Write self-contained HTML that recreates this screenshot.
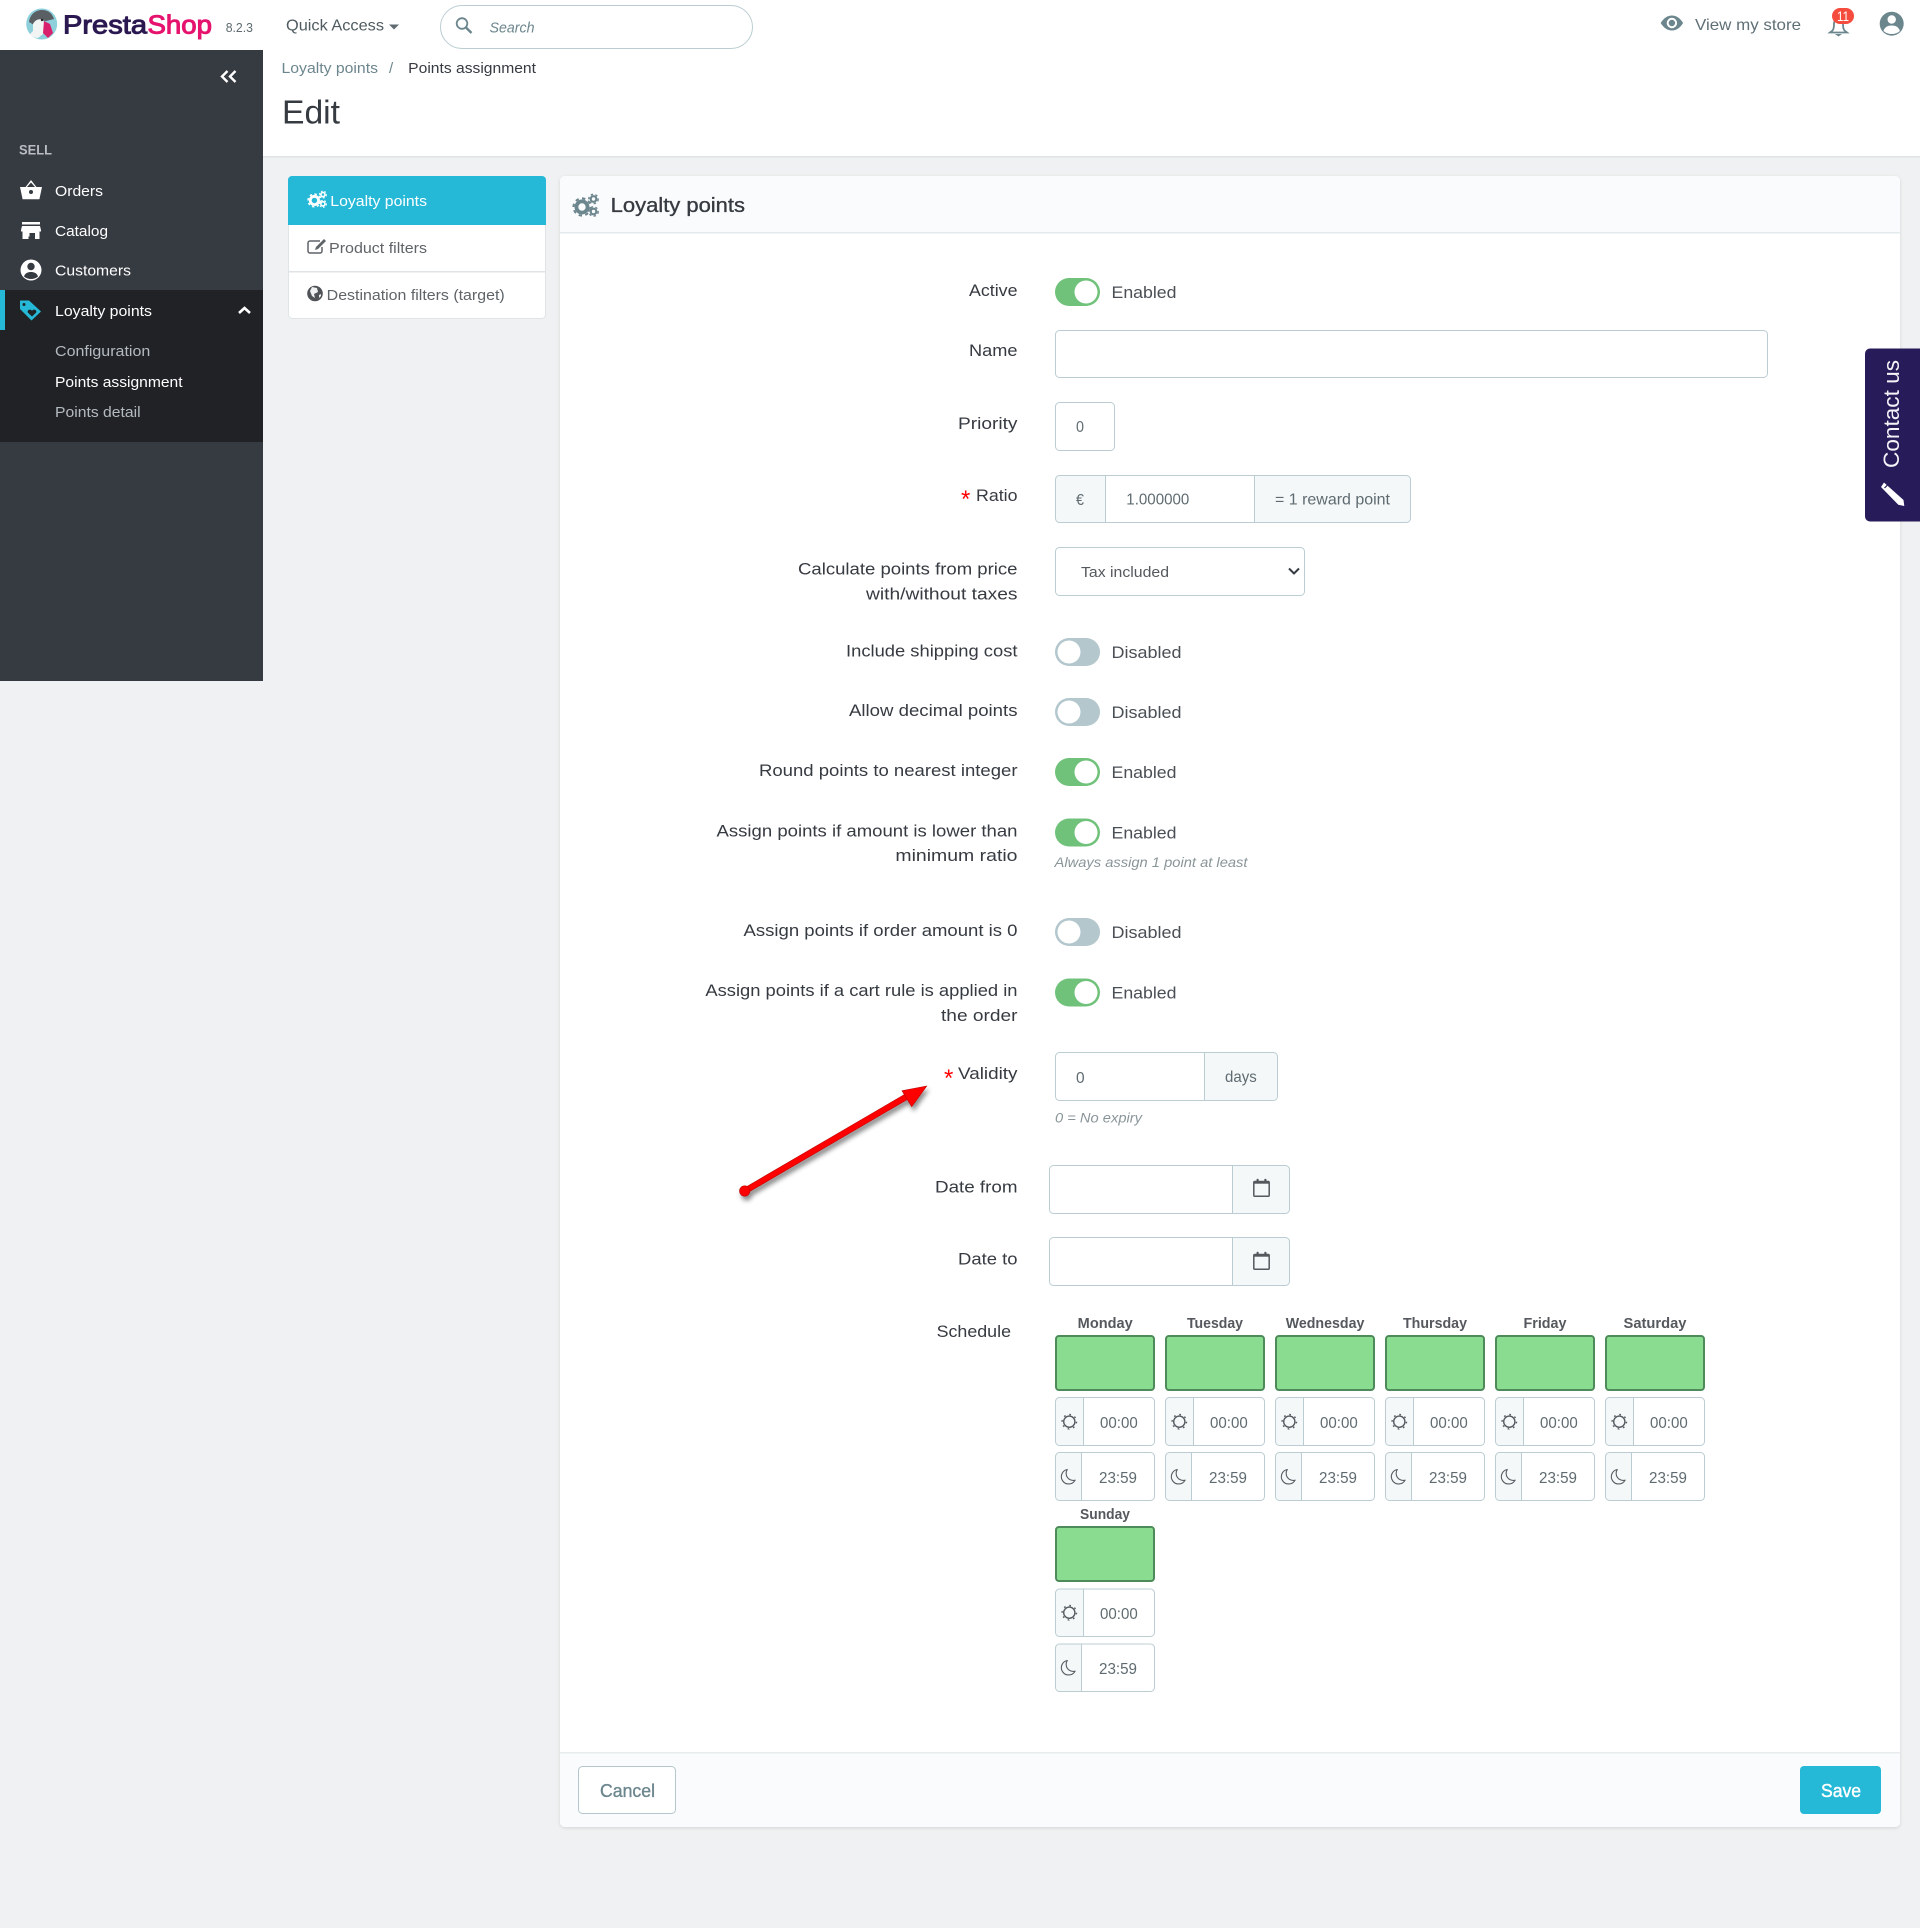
<!DOCTYPE html>
<html lang="en">
<head>
<meta charset="utf-8">
<title>PrestaShop - Edit Loyalty points</title>
<style>
html,body{margin:0;padding:0;background:#eff1f2;}
body{width:1920px;height:1928px;overflow:hidden;}
svg{display:block;font-family:"Liberation Sans",Arial,sans-serif;}
text{white-space:pre;}
.m{font-size:15px;fill:#fff;}
.s{font-size:15px;fill:#b4bbc0;}
.l{font-size:17px;fill:#363a41;}
.v{font-size:16px;fill:#5f6b70;}
.st{font-size:17px;fill:#4a4f55;}
.h{font-size:14px;fill:#8a9599;font-style:italic;}
.d{font-size:14.5px;font-weight:700;fill:#55595e;}
.tm{font-size:16px;fill:#5f6b70;}
.star{font-size:24px;fill:#f00;}
.box{fill:#fff;stroke:#bbcdd2;stroke-width:1;}
.add{fill:#f4f8f9;}
.div{stroke:#bbcdd2;stroke-width:1;}
.day{fill:#8add90;stroke:#4f8a5b;stroke-width:2;}
</style>
</head>
<body>
<svg xmlns="http://www.w3.org/2000/svg" width="1920" height="1928" viewBox="0 0 1920 1928">
<defs>
  <symbol id="gears" viewBox="0 0 27 24" overflow="visible">
    <circle cx="10" cy="14" r="5.6" fill="none" stroke="currentColor" stroke-width="3.8"/>
    <circle cx="10" cy="14" r="8.600" fill="none" stroke="currentColor" stroke-width="2" pathLength="16" stroke-dasharray="1 1"/>
    <circle cx="21.5" cy="6" r="2.800" fill="none" stroke="currentColor" stroke-width="2.200"/>
    <circle cx="21.5" cy="6" r="4.700" fill="none" stroke="currentColor" stroke-width="1.400" pathLength="12" stroke-dasharray="1 1"/>
    <circle cx="21.5" cy="18.5" r="2.800" fill="none" stroke="currentColor" stroke-width="2.200"/>
    <circle cx="21.5" cy="18.5" r="4.700" fill="none" stroke="currentColor" stroke-width="1.400" pathLength="12" stroke-dasharray="1 1"/>
  </symbol>
  <symbol id="sun" viewBox="-9 -9 18 18" overflow="visible">
    <circle r="5.6" fill="none" stroke="#555b60" stroke-width="1.400"/>
    <circle r="7.200" fill="none" stroke="#555b60" stroke-width="1.400" pathLength="16" stroke-dasharray="0.600 1.400"/>
  </symbol>
  <symbol id="moon" viewBox="-9 -9 18 18" overflow="visible">
    <path d="M-1 -7.2A7.3 7.3 0 1 0 6.8 3.4A7 7 0 0 1 -1 -7.2Z" fill="none" stroke="#555b60" stroke-width="1.100" stroke-linejoin="round"/>
  </symbol>
  <symbol id="cal" viewBox="0 0 17 19" overflow="visible">
    <rect x="0.8" y="3.5" width="15.4" height="14.7" rx="1" fill="none" stroke="#55595e" stroke-width="1.500"/>
    <rect x="0.8" y="3.5" width="15.4" height="2.200" fill="#55595e"/>
    <rect x="3.5" y="0.8" width="2.2" height="4.2" rx="1" fill="#55595e"/>
    <rect x="11.3" y="0.8" width="2.2" height="4.2" rx="1" fill="#55595e"/>
  </symbol>
  <filter id="sh" x="-20%" y="-20%" width="140%" height="140%">
    <feDropShadow dx="2" dy="4" stdDeviation="2.5" flood-color="#000" flood-opacity="0.45"/>
  </filter>
  <filter id="ps" x="-2%" y="-2%" width="104%" height="104%">
    <feDropShadow dx="0" dy="1" stdDeviation="1.5" flood-color="#000" flood-opacity="0.12"/>
  </filter>
</defs>

<!-- page backgrounds -->
<rect width="1920" height="1928" fill="#eff1f2"/>
<rect width="1920" height="156" fill="#fff"/>
<rect y="156" width="1920" height="1.5" fill="#dfe3e4"/>

<!-- sidebar -->
<rect y="50" width="263" height="631" fill="#363a41"/>
<rect y="290" width="263" height="152" fill="#202226"/>
<rect y="290" width="5" height="40" fill="#25b9d7"/>
<path d="M227.500 71l-5.500 5.500 5.500 5.500M235.500 71l-5.500 5.500 5.500 5.500" fill="none" stroke="#fff" stroke-width="2.400"/>
<text x="19" y="154.500" font-size="14" font-weight="700" fill="#b9bcc0" textLength="33" lengthAdjust="spacingAndGlyphs">SELL</text>

<!-- orders icon -->
<path d="M20 187h5.6L31 180l5.4 7H42l-2.6 12.3H22.6Z" fill="#fff"/>
<path d="M27 187L31 182.5 35 187Z" fill="#363a41"/>
<circle cx="31" cy="192" r="2" fill="#363a41"/>
<text class="m" x="55" y="196" textLength="48" lengthAdjust="spacingAndGlyphs">Orders</text>
<!-- catalog icon -->
<path d="M22 222h18v2.5H22ZM22 226h18l1 4v1.5h-1.5V239h-4.5v-6h-6.5v6H22.5v-7.500H21V230Z" fill="#fff"/>
<rect x="25" y="233" width="4.500" height="3.500" fill="#fff"/>
<text class="m" x="55" y="236" textLength="53" lengthAdjust="spacingAndGlyphs">Catalog</text>
<!-- customers icon -->
<circle cx="31" cy="270" r="10.500" fill="#fff"/>
<circle cx="31" cy="266.500" r="3.700" fill="#363a41"/>
<path d="M24 276.500c1-3.500 4-4.500 7-4.500s6 1 7 4.500c-2 1.700-4.500 2.500-7 2.500s-5-.8-7-2.500Z" fill="#363a41"/>
<text class="m" x="55" y="275.500" textLength="76" lengthAdjust="spacingAndGlyphs">Customers</text>
<!-- loyalty icon -->
<path d="M20 300.500h9l12 11-9.500 9L20 309Z" fill="#25b9d7"/>
<circle cx="24" cy="304.500" r="1.500" fill="#202226"/>
<path d="M32 316.500l-4-3.800c-1.500-2.200 1.900-4.400 4-2 2.100-2.400 5.500-.2 4 2Z" fill="#202226"/>
<text class="m" x="55" y="316" textLength="97" lengthAdjust="spacingAndGlyphs">Loyalty points</text>
<path d="M239 313l5.500-5 5.500 5" fill="none" stroke="#fff" stroke-width="2.600"/>
<text class="s" x="55" y="356" textLength="95.300" lengthAdjust="spacingAndGlyphs">Configuration</text>
<text class="m" x="55" y="387" textLength="127.600" lengthAdjust="spacingAndGlyphs">Points assignment</text>
<text class="s" x="55" y="417" textLength="85.600" lengthAdjust="spacingAndGlyphs">Points detail</text>

<!-- top bar: logo -->
<circle cx="41.700" cy="24" r="15.500" fill="#8dd0dc"/>
<path d="M29 22c1-8 7-12 13-12 6 0 10 3 12 9l-8 2-6-1-6 5-5-3Z" fill="#5a5f63"/>
<path d="M33 24c2-4 6-6 10-4l2 6-2 8-5 4c-4 0-7-2-8-4l3-3Z" fill="#f2f4f4"/>
<path d="M44 21l6 3 3 9-5 5-5-5Z" fill="#d8206c"/>
<circle cx="42" cy="20" r="1.200" fill="#222"/>
<text x="63" y="33.500" font-size="26" fill="#2b1850" stroke="#2b1850" stroke-width="1" textLength="84" lengthAdjust="spacingAndGlyphs">Presta</text>
<text x="147.500" y="33.500" font-size="26" fill="#e5136e" stroke="#e5136e" stroke-width="1" textLength="64.500" lengthAdjust="spacingAndGlyphs">Shop</text>
<text x="225.700" y="32" font-size="13" fill="#5f6b70" textLength="27.300" lengthAdjust="spacingAndGlyphs">8.2.3</text>
<text x="286" y="30.500" font-size="16" fill="#4f5b60" textLength="98" lengthAdjust="spacingAndGlyphs">Quick Access</text>
<path d="M389 24.500h10l-5 5Z" fill="#5f6b70"/>
<rect class="box" x="440.500" y="5.500" width="312" height="43" rx="21.500"/>
<circle cx="462" cy="23.500" r="5.300" fill="none" stroke="#6c868e" stroke-width="1.800"/>
<path d="M466 27.500l5.500 5.500" stroke="#6c868e" stroke-width="2.400"/>
<text x="489.500" y="32.500" font-size="15" font-style="italic" fill="#6c868e" textLength="45" lengthAdjust="spacingAndGlyphs">Search</text>

<!-- top right -->
<path d="M1660.700 23c3-5 7-7.500 11.200-7.500s8.200 2.500 11.200 7.500c-3 5-7 7.500-11.200 7.500s-8.200-2.500-11.200-7.500Z" fill="#6c868e"/>
<circle cx="1671.900" cy="23" r="5.200" fill="#fff"/>
<circle cx="1671.900" cy="23" r="3.200" fill="#6c868e"/>
<text x="1695" y="30" font-size="16" fill="#5f6f76" textLength="106" lengthAdjust="spacingAndGlyphs">View my store</text>
<path d="M1832 31c1.500-1 2-3 2-7 0-4 3-6 4.500-6s4.500 2 4.500 6c0 4 .5 6 2 7l2 1.500h-17Z" fill="none" stroke="#6c868e" stroke-width="1.800"/>
<path d="M1835 34h7l-3.500 2.500Z" fill="#6c868e"/>
<rect x="1832" y="8" width="22" height="16" rx="8" fill="#f54c3e"/>
<text x="1837" y="21" font-size="14" fill="#fff" textLength="12" lengthAdjust="spacingAndGlyphs">11</text>
<circle cx="1891.700" cy="23.700" r="12" fill="#6c868e"/>
<circle cx="1891.700" cy="19.500" r="4.200" fill="#fff"/>
<path d="M1883.500 31c1-4 4.500-5.500 8.200-5.500s7.200 1.500 8.200 5.500c-2.200 2-5 3-8.200 3s-6-1-8.200-3Z" fill="#fff"/>

<!-- header -->
<text x="281.500" y="73" font-size="15" fill="#6c868e" textLength="96.500" lengthAdjust="spacingAndGlyphs">Loyalty points</text>
<text x="389" y="73" font-size="15" fill="#6c868e">/</text>
<text x="408.200" y="73" font-size="15" fill="#363a41" textLength="127.800" lengthAdjust="spacingAndGlyphs">Points assignment</text>
<text x="282" y="123.500" font-size="33" fill="#363a41" textLength="58" lengthAdjust="spacingAndGlyphs">Edit</text>

<!-- tabs -->
<rect x="288.500" y="176.500" width="257" height="142" rx="4" fill="#fff" stroke="#dfe5e7"/>
<path d="M288 225V180a4 4 0 0 1 4-4H542a4 4 0 0 1 4 4V225Z" fill="#25b9d7"/>
<rect x="289" y="271" width="256" height="1.500" fill="#dfe3e5"/>
<use href="#gears" x="307" y="190" width="20" height="18" color="#fff"/>
<text x="330.300" y="206" font-size="15" fill="#fff" textLength="96.700" lengthAdjust="spacingAndGlyphs">Loyalty points</text>
<path d="M320 241h-10a2 2 0 0 0-2 2v8a2 2 0 0 0 2 2h10a2 2 0 0 0 2-2v-4" fill="none" stroke="#5f6468" stroke-width="1.500"/>
<path d="M324 239l2 2-8 8-3 1 1-3Z" fill="#5f6468"/>
<text x="329" y="253" font-size="15" fill="#5f6468" textLength="98" lengthAdjust="spacingAndGlyphs">Product filters</text>
<circle cx="315" cy="293.500" r="7.800" fill="#4f5357"/>
<path d="M312 287l5 1 1 4-4 2 1 4-3-2-2-5ZM319 295l2-1v2l-2 2Z" fill="#eef0f1"/>
<text x="326.700" y="300" font-size="15" fill="#5f6468" textLength="178" lengthAdjust="spacingAndGlyphs">Destination filters (target)</text>

<!-- panel -->
<rect x="560" y="176" width="1340" height="1651" rx="5" fill="#fff" filter="url(#ps)"/>
<path d="M560 232V181a5 5 0 0 1 5-5H1895a5 5 0 0 1 5 5V232Z" fill="#fafbfc"/>
<rect x="560" y="232" width="1340" height="1.500" fill="#e4ebed"/>
<use href="#gears" x="572" y="193" width="27" height="24" color="#6c868e"/>
<text x="610.700" y="212" font-size="20" fill="#363a41" stroke="#363a41" stroke-width="0.350" textLength="134.300" lengthAdjust="spacingAndGlyphs">Loyalty points</text>
<path d="M560 1752H1900V1822a5 5 0 0 1-5 5H565a5 5 0 0 1-5-5Z" fill="#fafbfc"/>
<rect x="560" y="1752" width="1340" height="1.500" fill="#e8ecee"/>

<!-- Active -->
<text class="l" x="969" y="296" textLength="48.500" lengthAdjust="spacingAndGlyphs">Active</text>
<rect x="1055" y="278" width="45" height="28" rx="14" fill="#70c27b"/><circle cx="1086" cy="292" r="11.500" fill="#fff"/>
<text class="st" x="1111.500" y="298" textLength="65" lengthAdjust="spacingAndGlyphs">Enabled</text>
<!-- Name -->
<text class="l" x="969" y="356" textLength="48.500" lengthAdjust="spacingAndGlyphs">Name</text>
<rect class="box" x="1055.500" y="330.500" width="712" height="47" rx="4"/>
<!-- Priority -->
<text class="l" x="958" y="429" textLength="59.500" lengthAdjust="spacingAndGlyphs">Priority</text>
<rect class="box" x="1055.500" y="402.500" width="59" height="48" rx="4"/>
<text class="v" x="1076" y="432" textLength="8" lengthAdjust="spacingAndGlyphs">0</text>
<!-- Ratio -->
<text class="star" x="961" y="507">*</text>
<text class="l" x="976" y="501" textLength="41.500" lengthAdjust="spacingAndGlyphs">Ratio</text>
<rect x="1055.500" y="475.500" width="355" height="47" rx="4" fill="#f4f8f9"/>
<rect x="1105.500" y="476" width="149" height="46" fill="#fff"/>
<rect x="1055.500" y="475.500" width="355" height="47" rx="4" fill="none" stroke="#bbcdd2"/>
<path class="div" d="M1105.500 475.500v47M1254.500 475.500v47"/>
<text class="v" x="1076" y="505" textLength="8" lengthAdjust="spacingAndGlyphs">€</text>
<text class="v" x="1126.300" y="504.500" textLength="63" lengthAdjust="spacingAndGlyphs">1.000000</text>
<text class="v" x="1275" y="504.500" textLength="115" lengthAdjust="spacingAndGlyphs">= 1 reward point</text>
<!-- Calculate -->
<text class="l" x="798" y="574.500" textLength="219.500" lengthAdjust="spacingAndGlyphs">Calculate points from price</text>
<text class="l" x="866" y="599.500" textLength="151.500" lengthAdjust="spacingAndGlyphs">with/without taxes</text>
<rect class="box" x="1055.500" y="547.500" width="249" height="48" rx="4"/>
<text x="1081" y="577" font-size="15" fill="#55595e" textLength="88" lengthAdjust="spacingAndGlyphs">Tax included</text>
<path d="M1289 568.500l5 5 5-5" fill="none" stroke="#363a41" stroke-width="2"/>
<!-- Include shipping -->
<text class="l" x="846" y="656.700" textLength="171.500" lengthAdjust="spacingAndGlyphs">Include shipping cost</text>
<rect x="1055" y="638" width="45" height="28" rx="14" fill="#b3c7cd"/><circle cx="1069" cy="652" r="11.500" fill="#fff"/>
<text class="st" x="1111.500" y="658" textLength="70" lengthAdjust="spacingAndGlyphs">Disabled</text>
<!-- Allow decimal -->
<text class="l" x="849" y="716" textLength="168.500" lengthAdjust="spacingAndGlyphs">Allow decimal points</text>
<rect x="1055" y="698" width="45" height="28" rx="14" fill="#b3c7cd"/><circle cx="1069" cy="712" r="11.500" fill="#fff"/>
<text class="st" x="1111.500" y="718" textLength="70" lengthAdjust="spacingAndGlyphs">Disabled</text>
<!-- Round -->
<text class="l" x="759" y="776" textLength="258.500" lengthAdjust="spacingAndGlyphs">Round points to nearest integer</text>
<rect x="1055" y="758" width="45" height="28" rx="14" fill="#70c27b"/><circle cx="1086" cy="772" r="11.500" fill="#fff"/>
<text class="st" x="1111.500" y="778" textLength="65" lengthAdjust="spacingAndGlyphs">Enabled</text>
<!-- Assign lower -->
<text class="l" x="716.500" y="836.500" textLength="301" lengthAdjust="spacingAndGlyphs">Assign points if amount is lower than</text>
<text class="l" x="895.400" y="861" textLength="122.100" lengthAdjust="spacingAndGlyphs">minimum ratio</text>
<rect x="1055" y="818.500" width="45" height="28" rx="14" fill="#70c27b"/><circle cx="1086" cy="832.500" r="11.500" fill="#fff"/>
<text class="st" x="1111.500" y="838.500" textLength="65" lengthAdjust="spacingAndGlyphs">Enabled</text>
<text class="h" x="1054.500" y="867" textLength="193" lengthAdjust="spacingAndGlyphs">Always assign 1 point at least</text>
<!-- Assign 0 -->
<text class="l" x="743.500" y="936" textLength="274" lengthAdjust="spacingAndGlyphs">Assign points if order amount is 0</text>
<rect x="1055" y="918" width="45" height="28" rx="14" fill="#b3c7cd"/><circle cx="1069" cy="932" r="11.500" fill="#fff"/>
<text class="st" x="1111.500" y="938" textLength="70" lengthAdjust="spacingAndGlyphs">Disabled</text>
<!-- Assign cart -->
<text class="l" x="705.400" y="996" textLength="312.100" lengthAdjust="spacingAndGlyphs">Assign points if a cart rule is applied in</text>
<text class="l" x="941" y="1021" textLength="76.500" lengthAdjust="spacingAndGlyphs">the order</text>
<rect x="1055" y="978.500" width="45" height="28" rx="14" fill="#70c27b"/><circle cx="1086" cy="992.500" r="11.500" fill="#fff"/>
<text class="st" x="1111.500" y="998.500" textLength="65" lengthAdjust="spacingAndGlyphs">Enabled</text>
<!-- Validity -->
<text class="star" x="944" y="1086">*</text>
<text class="l" x="958" y="1079" textLength="59.500" lengthAdjust="spacingAndGlyphs">Validity</text>
<rect x="1055.500" y="1052.500" width="222" height="48" rx="4" fill="#f4f8f9"/>
<path d="M1204.500 1053H1059.500a4 4 0 0 0-4 4v39a4 4 0 0 0 4 4H1204.500Z" fill="#fff"/>
<rect x="1055.500" y="1052.500" width="222" height="48" rx="4" fill="none" stroke="#bbcdd2"/>
<path class="div" d="M1204.500 1052.500v48"/>
<text class="v" x="1076" y="1083" textLength="8.600" lengthAdjust="spacingAndGlyphs">0</text>
<text class="v" x="1225" y="1082" textLength="31.700" lengthAdjust="spacingAndGlyphs">days</text>
<text class="h" x="1055" y="1122.700" textLength="87" lengthAdjust="spacingAndGlyphs">0 = No expiry</text>
<!-- Arrow -->
<g filter="url(#sh)">
  <path d="M743.300 1188.600L906.200 1093.500 909 1098.500 746.100 1193.600Z" fill="#f00" stroke="#c00000" stroke-width="0.600"/>
  <circle cx="744.700" cy="1191" r="5.200" fill="#f00" stroke="#c00000" stroke-width="0.600"/>
  <path d="M926.700 1086L902 1090.700 911.700 1106.700Z" fill="#f00" stroke="#c00000" stroke-width="0.600"/>
</g>
<!-- Date from/to -->
<text class="l" x="935" y="1192.700" textLength="82.500" lengthAdjust="spacingAndGlyphs">Date from</text>
<rect x="1049.500" y="1165.500" width="240" height="48" rx="4" fill="#f4f8f9"/>
<path d="M1232.500 1166H1053.500a4 4 0 0 0-4 4v39a4 4 0 0 0 4 4H1232.500Z" fill="#fff"/>
<rect x="1049.500" y="1165.500" width="240" height="48" rx="4" fill="none" stroke="#bbcdd2"/>
<path class="div" d="M1232.500 1165.500v48"/>
<use href="#cal" x="1253" y="1178" width="17" height="19"/>
<text class="l" x="958" y="1264.500" textLength="59.500" lengthAdjust="spacingAndGlyphs">Date to</text>
<rect x="1049.500" y="1237.500" width="240" height="48" rx="4" fill="#f4f8f9"/>
<path d="M1232.500 1238H1053.500a4 4 0 0 0-4 4v39a4 4 0 0 0 4 4H1232.500Z" fill="#fff"/>
<rect x="1049.500" y="1237.500" width="240" height="48" rx="4" fill="none" stroke="#bbcdd2"/>
<path class="div" d="M1232.500 1237.500v48"/>
<use href="#cal" x="1253" y="1251" width="17" height="19"/>
<!-- Schedule -->
<text class="l" x="936.600" y="1337" textLength="74.400" lengthAdjust="spacingAndGlyphs">Schedule</text>

<!-- Monday -->
<g>
  <text class="d" x="1077.700" y="1328" textLength="55" lengthAdjust="spacingAndGlyphs">Monday</text>
  <rect class="day" x="1056" y="1336" width="98" height="54" rx="3"/>
  <rect x="1055.500" y="1397.500" width="99" height="48" rx="4" fill="#fff"/><path d="M1083.500 1398H1059.500a4 4 0 0 0-4 4v39a4 4 0 0 0 4 4H1083.500Z" fill="#f4f8f9"/><rect x="1055.500" y="1397.500" width="99" height="48" rx="4" fill="none" stroke="#bbcdd2"/><path class="div" d="M1083.500 1397.500v48"/>
  <use href="#sun" x="1060.300" y="1412.700" width="18" height="18"/>
  <text class="tm" x="1100" y="1428" textLength="37.700" lengthAdjust="spacingAndGlyphs">00:00</text>
  <rect x="1055.500" y="1452.500" width="99" height="48" rx="4" fill="#fff"/><path d="M1081.500 1453H1059.500a4 4 0 0 0-4 4v39a4 4 0 0 0 4 4H1081.500Z" fill="#f4f8f9"/><rect x="1055.500" y="1452.500" width="99" height="48" rx="4" fill="none" stroke="#bbcdd2"/><path class="div" d="M1081.500 1452.500v48"/>
  <use href="#moon" x="1059.300" y="1467.700" width="18" height="18"/>
  <text class="tm" x="1099" y="1483" textLength="38" lengthAdjust="spacingAndGlyphs">23:59</text>
</g>
<!-- Tuesday -->
<g transform="translate(110,0)">
  <text class="d" x="1077" y="1328" textLength="56" lengthAdjust="spacingAndGlyphs">Tuesday</text>
  <rect class="day" x="1056" y="1336" width="98" height="54" rx="3"/>
  <rect x="1055.500" y="1397.500" width="99" height="48" rx="4" fill="#fff"/><path d="M1083.500 1398H1059.500a4 4 0 0 0-4 4v39a4 4 0 0 0 4 4H1083.500Z" fill="#f4f8f9"/><rect x="1055.500" y="1397.500" width="99" height="48" rx="4" fill="none" stroke="#bbcdd2"/><path class="div" d="M1083.500 1397.500v48"/>
  <use href="#sun" x="1060.300" y="1412.700" width="18" height="18"/>
  <text class="tm" x="1100" y="1428" textLength="37.700" lengthAdjust="spacingAndGlyphs">00:00</text>
  <rect x="1055.500" y="1452.500" width="99" height="48" rx="4" fill="#fff"/><path d="M1081.500 1453H1059.500a4 4 0 0 0-4 4v39a4 4 0 0 0 4 4H1081.500Z" fill="#f4f8f9"/><rect x="1055.500" y="1452.500" width="99" height="48" rx="4" fill="none" stroke="#bbcdd2"/><path class="div" d="M1081.500 1452.500v48"/>
  <use href="#moon" x="1059.300" y="1467.700" width="18" height="18"/>
  <text class="tm" x="1099" y="1483" textLength="38" lengthAdjust="spacingAndGlyphs">23:59</text>
</g>
<!-- Wednesday -->
<g transform="translate(220,0)">
  <text class="d" x="1065.700" y="1328" textLength="78.700" lengthAdjust="spacingAndGlyphs">Wednesday</text>
  <rect class="day" x="1056" y="1336" width="98" height="54" rx="3"/>
  <rect x="1055.500" y="1397.500" width="99" height="48" rx="4" fill="#fff"/><path d="M1083.500 1398H1059.500a4 4 0 0 0-4 4v39a4 4 0 0 0 4 4H1083.500Z" fill="#f4f8f9"/><rect x="1055.500" y="1397.500" width="99" height="48" rx="4" fill="none" stroke="#bbcdd2"/><path class="div" d="M1083.500 1397.500v48"/>
  <use href="#sun" x="1060.300" y="1412.700" width="18" height="18"/>
  <text class="tm" x="1100" y="1428" textLength="37.700" lengthAdjust="spacingAndGlyphs">00:00</text>
  <rect x="1055.500" y="1452.500" width="99" height="48" rx="4" fill="#fff"/><path d="M1081.500 1453H1059.500a4 4 0 0 0-4 4v39a4 4 0 0 0 4 4H1081.500Z" fill="#f4f8f9"/><rect x="1055.500" y="1452.500" width="99" height="48" rx="4" fill="none" stroke="#bbcdd2"/><path class="div" d="M1081.500 1452.500v48"/>
  <use href="#moon" x="1059.300" y="1467.700" width="18" height="18"/>
  <text class="tm" x="1099" y="1483" textLength="38" lengthAdjust="spacingAndGlyphs">23:59</text>
</g>
<!-- Thursday -->
<g transform="translate(330,0)">
  <text class="d" x="1073" y="1328" textLength="64" lengthAdjust="spacingAndGlyphs">Thursday</text>
  <rect class="day" x="1056" y="1336" width="98" height="54" rx="3"/>
  <rect x="1055.500" y="1397.500" width="99" height="48" rx="4" fill="#fff"/><path d="M1083.500 1398H1059.500a4 4 0 0 0-4 4v39a4 4 0 0 0 4 4H1083.500Z" fill="#f4f8f9"/><rect x="1055.500" y="1397.500" width="99" height="48" rx="4" fill="none" stroke="#bbcdd2"/><path class="div" d="M1083.500 1397.500v48"/>
  <use href="#sun" x="1060.300" y="1412.700" width="18" height="18"/>
  <text class="tm" x="1100" y="1428" textLength="37.700" lengthAdjust="spacingAndGlyphs">00:00</text>
  <rect x="1055.500" y="1452.500" width="99" height="48" rx="4" fill="#fff"/><path d="M1081.500 1453H1059.500a4 4 0 0 0-4 4v39a4 4 0 0 0 4 4H1081.500Z" fill="#f4f8f9"/><rect x="1055.500" y="1452.500" width="99" height="48" rx="4" fill="none" stroke="#bbcdd2"/><path class="div" d="M1081.500 1452.500v48"/>
  <use href="#moon" x="1059.300" y="1467.700" width="18" height="18"/>
  <text class="tm" x="1099" y="1483" textLength="38" lengthAdjust="spacingAndGlyphs">23:59</text>
</g>
<!-- Friday -->
<g transform="translate(440,0)">
  <text class="d" x="1083.500" y="1328" textLength="43" lengthAdjust="spacingAndGlyphs">Friday</text>
  <rect class="day" x="1056" y="1336" width="98" height="54" rx="3"/>
  <rect x="1055.500" y="1397.500" width="99" height="48" rx="4" fill="#fff"/><path d="M1083.500 1398H1059.500a4 4 0 0 0-4 4v39a4 4 0 0 0 4 4H1083.500Z" fill="#f4f8f9"/><rect x="1055.500" y="1397.500" width="99" height="48" rx="4" fill="none" stroke="#bbcdd2"/><path class="div" d="M1083.500 1397.500v48"/>
  <use href="#sun" x="1060.300" y="1412.700" width="18" height="18"/>
  <text class="tm" x="1100" y="1428" textLength="37.700" lengthAdjust="spacingAndGlyphs">00:00</text>
  <rect x="1055.500" y="1452.500" width="99" height="48" rx="4" fill="#fff"/><path d="M1081.500 1453H1059.500a4 4 0 0 0-4 4v39a4 4 0 0 0 4 4H1081.500Z" fill="#f4f8f9"/><rect x="1055.500" y="1452.500" width="99" height="48" rx="4" fill="none" stroke="#bbcdd2"/><path class="div" d="M1081.500 1452.500v48"/>
  <use href="#moon" x="1059.300" y="1467.700" width="18" height="18"/>
  <text class="tm" x="1099" y="1483" textLength="38" lengthAdjust="spacingAndGlyphs">23:59</text>
</g>
<!-- Saturday -->
<g transform="translate(550,0)">
  <text class="d" x="1073.500" y="1328" textLength="63" lengthAdjust="spacingAndGlyphs">Saturday</text>
  <rect class="day" x="1056" y="1336" width="98" height="54" rx="3"/>
  <rect x="1055.500" y="1397.500" width="99" height="48" rx="4" fill="#fff"/><path d="M1083.500 1398H1059.500a4 4 0 0 0-4 4v39a4 4 0 0 0 4 4H1083.500Z" fill="#f4f8f9"/><rect x="1055.500" y="1397.500" width="99" height="48" rx="4" fill="none" stroke="#bbcdd2"/><path class="div" d="M1083.500 1397.500v48"/>
  <use href="#sun" x="1060.300" y="1412.700" width="18" height="18"/>
  <text class="tm" x="1100" y="1428" textLength="37.700" lengthAdjust="spacingAndGlyphs">00:00</text>
  <rect x="1055.500" y="1452.500" width="99" height="48" rx="4" fill="#fff"/><path d="M1081.500 1453H1059.500a4 4 0 0 0-4 4v39a4 4 0 0 0 4 4H1081.500Z" fill="#f4f8f9"/><rect x="1055.500" y="1452.500" width="99" height="48" rx="4" fill="none" stroke="#bbcdd2"/><path class="div" d="M1081.500 1452.500v48"/>
  <use href="#moon" x="1059.300" y="1467.700" width="18" height="18"/>
  <text class="tm" x="1099" y="1483" textLength="38" lengthAdjust="spacingAndGlyphs">23:59</text>
</g>
<!-- Sunday -->
<g transform="translate(0,191)">
  <text class="d" x="1080" y="1328" textLength="50" lengthAdjust="spacingAndGlyphs">Sunday</text>
  <rect class="day" x="1056" y="1336" width="98" height="54" rx="3"/>
  <rect x="1055.500" y="1398" width="99" height="47.500" rx="4" fill="#fff"/><path d="M1083.500 1398.500H1059.500a4 4 0 0 0-4 4v38.500a4 4 0 0 0 4 4H1083.500Z" fill="#f4f8f9"/><rect x="1055.500" y="1398" width="99" height="47.500" rx="4" fill="none" stroke="#bbcdd2"/><path class="div" d="M1083.500 1398v47.500"/>
  <use href="#sun" x="1060.300" y="1412.700" width="18" height="18"/>
  <text class="tm" x="1100" y="1428" textLength="37.700" lengthAdjust="spacingAndGlyphs">00:00</text>
  <rect x="1055.500" y="1453" width="99" height="47.500" rx="4" fill="#fff"/><path d="M1081.500 1453.500H1059.500a4 4 0 0 0-4 4v38.500a4 4 0 0 0 4 4H1081.500Z" fill="#f4f8f9"/><rect x="1055.500" y="1453" width="99" height="47.500" rx="4" fill="none" stroke="#bbcdd2"/><path class="div" d="M1081.500 1453v47.500"/>
  <use href="#moon" x="1059.300" y="1467.700" width="18" height="18"/>
  <text class="tm" x="1099" y="1483" textLength="38" lengthAdjust="spacingAndGlyphs">23:59</text>
</g>

<!-- Footer buttons -->
<rect x="578.500" y="1766.500" width="97" height="47" rx="4" fill="#fff" stroke="#b5c7cc"/>
<text x="600" y="1797" font-size="18" fill="#6c868e" stroke="#6c868e" stroke-width="0.350" textLength="55" lengthAdjust="spacingAndGlyphs">Cancel</text>
<rect x="1800" y="1766" width="81" height="48" rx="4" fill="#25b9d7"/>
<text x="1821" y="1797" font-size="18" fill="#fff" stroke="#fff" stroke-width="0.400" textLength="40" lengthAdjust="spacingAndGlyphs">Save</text>

<!-- Contact us -->
<path d="M1920 348.500H1870a5 5 0 0 0-5 5V516.500a5 5 0 0 0 5 5H1920Z" fill="#281b5a"/>
<text transform="translate(1899,468) rotate(-90)" x="0" y="0" font-size="22" fill="#f4f3f8" textLength="108" lengthAdjust="spacingAndGlyphs">Contact us</text>
<path d="M1884 482.500l19.500 17.500 .8 6-6-1.200L1881 487Z" fill="#fff"/>
<path d="M1884.500 488l4-4" stroke="#281b5a" stroke-width="1.200"/>
</svg>
</body>
</html>
